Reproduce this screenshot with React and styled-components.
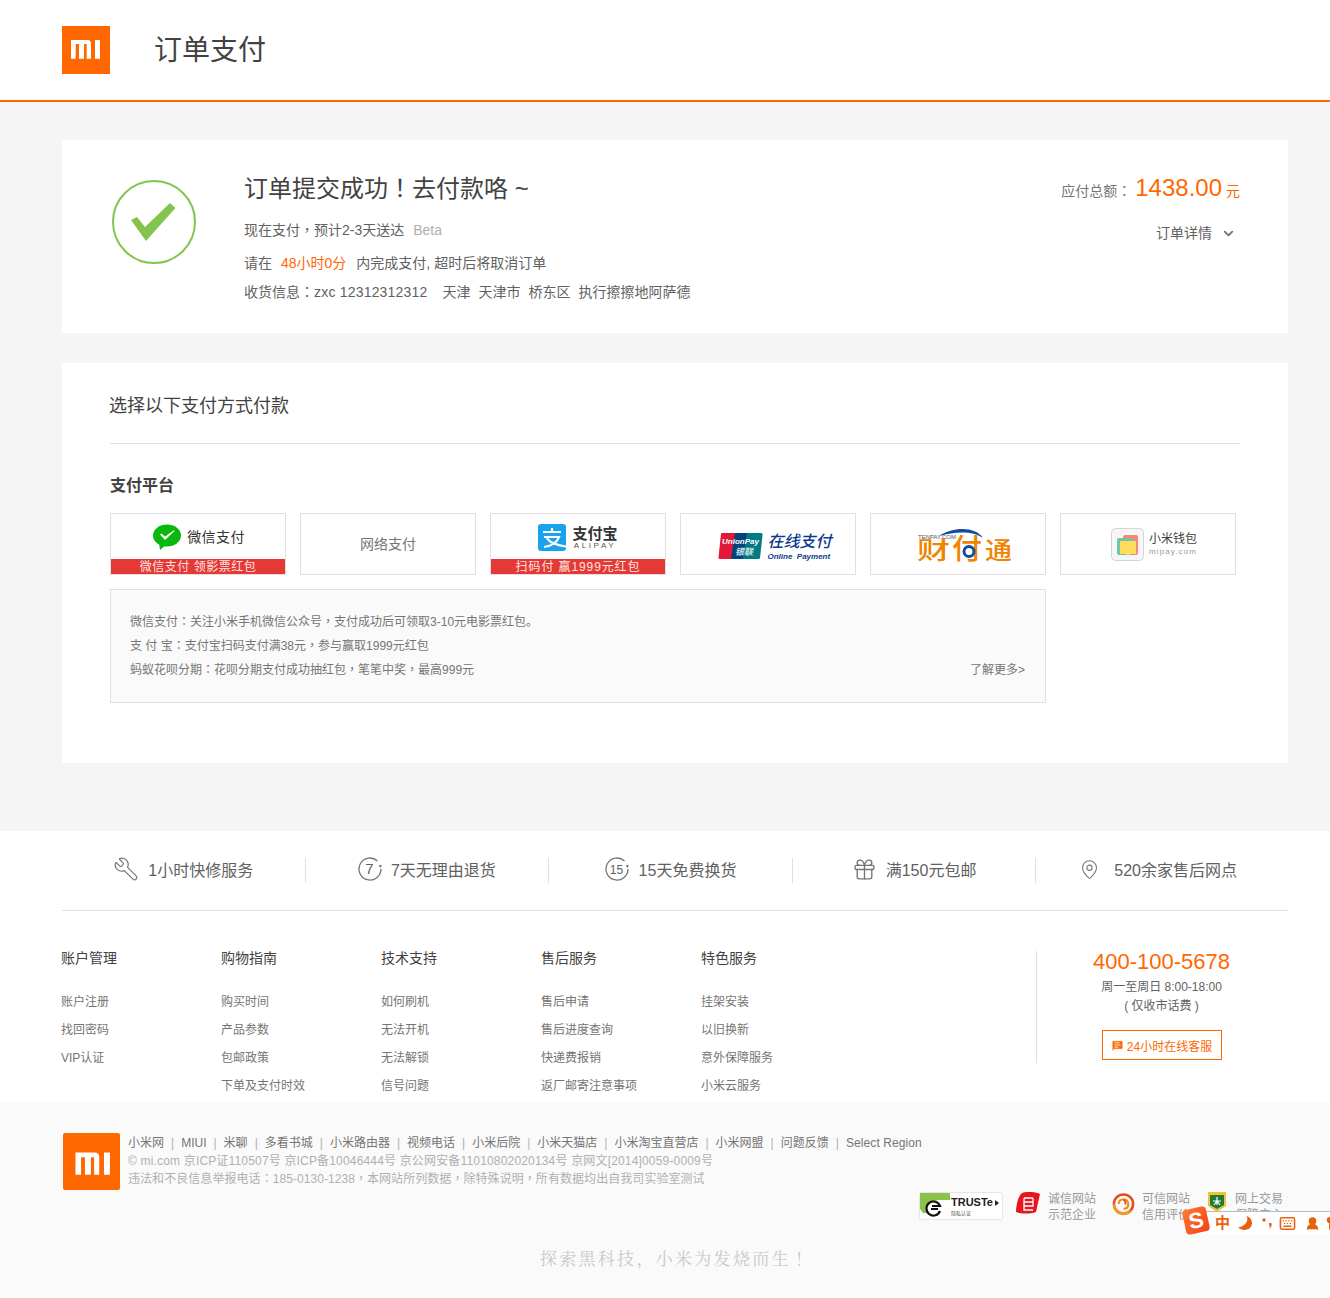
import React from "react";
import styled, { createGlobalStyle } from "styled-components";
import { Wrench, Gift, MapPin, ChevronDown, MessageSquareText, Keyboard, UserRound, Shirt } from "lucide-react";

const FONT = '"Liberation Sans", "Noto Sans CJK SC", sans-serif';
const ORANGE = "#ff6700";

const Global = createGlobalStyle`
  html, body { margin: 0; padding: 0; background: #fff; }
  #root { width: 1330px; height: 1298px; overflow: hidden; position: relative; }
  * { box-sizing: border-box; }
  body { font-family: ${FONT}; color: #616161; }
`;

const P = styled.span`
  font-family: "Noto Sans CJK TC", sans-serif;
  line-height: 0;
`;
const Header = styled.header`
  height: 102px;
  background: #fff;
  border-bottom: 2px solid ${ORANGE};
  padding: 26px 62px 0;
  display: flex;
  align-items: flex-start;
`;
const LogoBox = styled.div`
  width: ${(p) => p.$size}px;
  height: ${(p) => p.$size}px;
  background: ${ORANGE};
  flex: none;
  border-radius: ${(p) => p.$radius || 0}px;
  & > svg { display: block; width: 100%; height: 100%; }
`;
const PageTitle = styled.h1`
  margin: 5px 0 0 44px;
  font-size: 28px;
  line-height: 40px;
  font-weight: 400;
  color: #424242;
`;
const Main = styled.main`
  background: #f5f5f5;
  height: 729px;
  padding: 38px 42px 0 62px;
`;
const OrderCard = styled.section`
  height: 193px;
  background: #fff;
  padding: 35px 48px 0 50px;
  display: flex;
  align-items: flex-start;
`;
const CheckBadge = styled.svg`
  width: 84px;
  height: 84px;
  margin-top: 5px;
  flex: none;
`;
const OrderInfo = styled.div`
  margin-left: 48px;
`;
const OrderTitle = styled.h2`
  margin: 0 0 13px;
  font-size: 24px;
  line-height: 28px;
  font-weight: 400;
  color: #424242;
  white-space: pre;
`;
const OrderLine = styled.p`
  margin: 0 0 ${(p) => p.$after}px;
  font-size: 14px;
  line-height: 28px;
  color: #616161;
  white-space: pre;
`;
const Beta = styled.span`
  color: #b0b0b0;
  margin-left: 9px;
`;
const Hot = styled.span`
  color: ${ORANGE};
  margin: 0 10px 0 9px;
`;
const Digits = styled.span`
  letter-spacing: 0.2px;
`;
const Addr = styled.span`
  margin-left: ${(p) => p.$left}px;
`;
const OrderTotal = styled.div`
  margin-left: auto;
  margin-top: -1px;
  text-align: right;
`;
const TotalLine = styled.div`
  font-size: 14px;
  line-height: 28px;
  color: #757575;
  white-space: nowrap;
`;
const TotalAmount = styled.span`
  font-size: 24px;
  color: ${ORANGE};
  margin: 0 4px;
`;
const TotalUnit = styled.span`
  color: ${ORANGE};
`;
const DetailToggle = styled.div`
  margin-top: 14px;
  font-size: 14px;
  line-height: 28px;
  color: #616161;
  display: flex;
  justify-content: flex-end;
  align-items: center;
  gap: 9px;
  padding-right: 4px;
`;
const PayCard = styled.section`
  height: 400px;
  margin-top: 30px;
  background: #fff;
  padding: 29px 48px 0;
`;
const PayHeading = styled.h3`
  margin: 0;
  padding-bottom: 23px;
  border-bottom: 1px solid #e0e0e0;
  font-size: 18px;
  line-height: 28px;
  font-weight: 400;
  text-indent: -1px;
  color: #424242;
`;
const PlatformTitle = styled.h4`
  margin: 29px 0 14px;
  font-size: 16px;
  line-height: 26px;
  font-weight: 700;
  color: #424242;
`;
const Tiles = styled.div`
  display: flex;
  gap: 14px;
`;
const Tile = styled.div`
  position: relative;
  width: 176px;
  height: 62px;
  border: 1px solid #e0e0e0;
  background: #fff;
  flex: none;
  display: flex;
  justify-content: center;
  padding-top: ${(p) => p.$top || 0}px;
`;
const PromoStrip = styled.div`
  position: absolute;
  left: 0;
  right: 0;
  bottom: 0;
  height: 15px;
  background: #e53935;
  color: #ffe4e0;
  text-align: center;
  font-size: 12px;
  line-height: 16px;
  letter-spacing: ${(p) => p.$spacing}px;
  overflow: hidden;
`;
const BrandRow = styled.div`
  display: flex;
  align-items: ${(p) => p.$align || "center"};
  height: max-content;
  gap: ${(p) => p.$gap}px;
  margin-left: ${(p) => p.$left || 0}px;
`;
const WeChatLabel = styled.span`
  font-size: 14px;
  line-height: 26px;
  letter-spacing: 0.4px;
  color: #333;
`;
const NetLabel = styled.span`
  font-size: 14px;
  line-height: 60px;
  color: #757575;
`;
const AlipayBlock = styled.div`
  display: flex;
  flex-direction: column;
  align-items: center;
  padding-top: 2px;
`;
const AlipayName = styled.span`
  font-size: 15px;
  line-height: 15px;
  font-weight: 700;
  color: #333;
`;
const AlipayLatin = styled.span`
  font-size: 8px;
  line-height: 10px;
  letter-spacing: 2.6px;
  color: #555;
`;
const UnionBlock = styled.div`
  display: flex;
  flex-direction: column;
  color: #0b3b8c;
  padding-top: 1px;
`;
const UnionName = styled.span`
  font-size: 16px;
  line-height: 18px;
  font-weight: 500;
  font-style: italic;
`;
const UnionLatin = styled.span`
  font-size: 8px;
  line-height: 11px;
  font-weight: 700;
  font-style: italic;
  white-space: pre;
`;
const MiPayBlock = styled.div`
  display: flex;
  flex-direction: column;
`;
const MiPayName = styled.span`
  font-size: 12px;
  line-height: 14px;
  color: #424242;
`;
const MiPayLatin = styled.span`
  font-size: 8px;
  line-height: 12px;
  letter-spacing: 1.1px;
  color: #999;
`;
const Notice = styled.div`
  margin-top: 14px;
  width: 936px;
  height: 114px;
  background: #fafafa;
  border: 1px solid #e0e0e0;
  padding: 20px 20px 0 19px;
  font-size: 12px;
  line-height: 24px;
  color: #757575;
`;
const NoticeRow = styled.div`
  display: flex;
  justify-content: space-between;
`;
const FooterTop = styled.footer`
  background: #fff;
  height: 272px;
  padding: 0 42px 0 62px;
`;
const Services = styled.ul`
  list-style: none;
  margin: 0;
  padding: 27px 0 0;
  height: 80px;
  border-bottom: 1px solid #e0e0e0;
  display: flex;
`;
const Service = styled.li`
  width: 243.6px;
  height: 25px;
  padding-bottom: 3px;
  display: flex;
  align-items: center;
  justify-content: center;
  gap: ${(p) => p.$gap}px;
  font-size: 16px;
  color: #616161;
  border-right: ${(p) => (p.$last ? "none" : "1px solid #e0e0e0")};
  & > svg { flex: none; color: #757575; }
`;
const FlipWrench = styled(Wrench)`
  transform: scaleX(-1);
`;
const FooterBody = styled.div`
  display: flex;
  padding-top: 40px;
  margin-left: -1px;
`;
const NavCol = styled.div`
  width: 160px;
  flex: none;
`;
const NavHead = styled.div`
  font-size: 14px;
  line-height: 14px;
  color: #424242;
  margin-bottom: 23px;
`;
const NavLink = styled.div`
  font-size: 12px;
  line-height: 28px;
  color: #757575;
`;
const Contact = styled.div`
  margin-left: auto;
  width: 252px;
  height: 112px;
  padding-right: 2px;
  border-left: 1px solid #e0e0e0;
  display: flex;
  flex-direction: column;
  align-items: center;
`;
const Phone = styled.div`
  font-size: 22px;
  line-height: 22px;
  color: ${ORANGE};
`;
const ContactText = styled.div`
  margin-top: 5px;
  font-size: 12px;
  line-height: 19px;
  color: #616161;
  text-align: center;
  white-space: pre;
`;
const ChatButton = styled.div`
  margin-top: 14px;
  width: 120px;
  height: 30px;
  border: 1px solid ${ORANGE};
  color: ${ORANGE};
  font-size: 12px;
  display: flex;
  align-items: center;
  justify-content: center;
  gap: 3px;
`;
const FooterInfo = styled.div`
  height: 195px;
  background: #fafafa;
  padding: 30px 47px 0 63px;
`;
const InfoRow = styled.div`
  display: flex;
  align-items: flex-start;
`;
const InfoText = styled.div`
  margin-left: 8px;
  padding-top: 1px;
  width: 785px;
  flex: none;
  font-size: 12px;
  line-height: 18px;
  color: #b0b0b0;
  white-space: nowrap;
`;
const InfoLine = styled.div`
  letter-spacing: ${(p) => p.$spacing || 0}px;
`;
const InfoLink = styled.span`
  color: #757575;
  letter-spacing: ${(p) => (p.$latin ? 0.1 : 0)}px;
`;
const InfoSep = styled.span`
  color: #b0b0b0;
  margin: 0 7px;
`;
const Badges = styled.div`
  margin-left: auto;
  margin-top: 59px;
  flex: none;
  display: flex;
  align-items: flex-start;
  white-space: nowrap;
`;
const Badge = styled.div`
  display: flex;
  align-items: flex-start;
  margin-left: ${(p) => p.$left}px;
  & > svg { flex: none; display: block; }
`;
const BadgeText = styled.div`
  margin-left: ${(p) => p.$left}px;
  margin-top: -1px;
  font-size: 12px;
  line-height: 16px;
  color: #999;
`;
const Slogan = styled.div`
  margin-top: 24px;
  padding-left: 4px;
  text-align: center;
  font-family: "Noto Serif CJK SC", "Liberation Serif", serif;
  font-size: 17px;
  line-height: 22px;
  letter-spacing: 2.3px;
  color: #c8c8c8;
`;
const SloganMark = styled.span`
  font-family: "Noto Serif CJK TC", "Liberation Serif", serif;
  line-height: 0;
`;
const Ime = styled.div`
  position: absolute;
  left: 1195px;
  top: 1211px;
  width: 140px;
  height: 23px;
  background: #fff;
  border-top: 1px solid #a9bfd2;
  border-left: 1px solid #a9bfd2;
  display: flex;
  align-items: center;
  padding-left: 19px;
  color: #e8610c;
`;
const ImeLogo = styled.div`
  position: absolute;
  left: -12px;
  top: -4px;
  width: 24px;
  height: 25px;
  border-radius: 4px;
  transform: rotate(-12deg);
  background: linear-gradient(135deg, #ff7a2f, #f1431a);
  color: #fff;
  font-size: 22px;
  font-weight: 700;
  line-height: 25px;
  text-align: center;
`;
const ImeChar = styled.span`
  font-size: 15px;
  font-weight: 700;
  line-height: 20px;
  margin-right: 8px;
`;
const ImeIcon = styled.span`
  display: flex;
  flex: none;
  margin-right: ${(p) => p.$right}px;
`;

function MiMark({ footer }) {
  return (
    <svg viewBox={footer ? "-1.5 -2.5 48 48" : "0 0 48 48"}>
      <path
        fill="#fff"
        d="M9 14H25.500a3.500 3.500 0 0 1 3.500 3.500V32.700H24.700V18H22V32.700H17V18H13.700V32.700H9ZM33 14h5V32.700h-5Z"
      />
    </svg>
  );
}

function WeChatIcon() {
  return (
    <svg width="28" height="26" viewBox="0 0 28 26">
      <ellipse cx="14" cy="11.5" rx="14" ry="11" fill="#09b80d" />
      <path d="M6 19l1 7 6-5z" fill="#09b80d" />
      <path d="M7 10.500l1.500-1 3.500 3 9-6.200.6.6L12 16z" fill="#fff" />
    </svg>
  );
}

function AlipayIcon() {
  return (
    <svg width="28" height="27" viewBox="0 0 28 27">
      <rect width="28" height="27" rx="3" fill="#1aa3ed" />
      <path
        d="M5 8h18M14 4v4M6 13h15c-2 6-8 9-15 10M9 14c2 4 8 7 19 8.500"
        stroke="#fff"
        strokeWidth="2.200"
        fill="none"
      />
    </svg>
  );
}

function UnionIcon() {
  return (
    <svg width="45" height="28" viewBox="0 0 45 28">
      <path d="M4 1h14L14 27H2q-2 0-1.500-2L3 2q.3-1 1-1z" fill="#e21836" />
      <path d="M17 1h13L26 27H13z" fill="#00447c" />
      <path d="M29 1h14q2 0 1.500 2L42 26q-.2 1-1.500 1H25z" fill="#007b84" />
      <text x="4" y="12" fontFamily="Liberation Sans" fontSize="8" fontWeight="700" fontStyle="italic" fill="#fff">UnionPay</text>
      <text x="17" y="23" fontFamily="Noto Sans CJK SC" fontSize="9" fontWeight="700" fontStyle="italic" fill="#cfe6ea">银联</text>
    </svg>
  );
}

function TenpayLogo() {
  return (
    <svg width="96" height="47" viewBox="0 0 96 47">
      <path d="M22 15C36 6 58 5 66 17C56 10 40 10 22 15Z" fill="#124c9c" />
      <text x="1" y="18" fontFamily="Liberation Sans" fontSize="6" fill="#555">TENPAY.COM</text>
      <text x="0" y="38" fontFamily="Noto Sans CJK SC" fontSize="24" fontWeight="500" fill="#f08300" textLength="33" lengthAdjust="spacingAndGlyphs">财</text>
      <text x="35" y="38" fontFamily="Noto Sans CJK SC" fontSize="28" fontWeight="500" fill="#f08300" textLength="30" lengthAdjust="spacingAndGlyphs">付</text>
      <text x="68" y="38" fontFamily="Noto Sans CJK SC" fontSize="24" fontWeight="500" fill="#f08300" textLength="27" lengthAdjust="spacingAndGlyphs">通</text>
      <circle cx="52" cy="30.500" r="5" fill="#fff" stroke="#124c9c" strokeWidth="3" />
    </svg>
  );
}

function MiPayIcon() {
  return (
    <svg width="33" height="33" viewBox="0 0 33 33">
      <rect x=".5" y=".5" width="32" height="32" rx="4" fill="#f6f6f6" stroke="#d5d5d5" />
      <rect x="12" y="7" width="15" height="20" rx="2" fill="#fb8678" />
      <rect x="6" y="10" width="17" height="17" rx="2" fill="#6ec6a2" />
      <path d="M9 13h16v13h-6l-2 2-2-2H9z" fill="#ffdb5c" />
    </svg>
  );
}

function DayCircle({ label, size }) {
  return (
    <svg width="24" height="24" viewBox="0 0 24 24" fill="none">
      <path d="M19.500 4A11 11 0 1 0 23 12" stroke="#757575" strokeWidth="1.300" />
      <path d="M20.500 8.500l2.300 2.500 1-3.300z" fill="#757575" />
      <text x="11.500" y="17" textAnchor="middle" fontFamily="Liberation Sans" fontSize={size} fill="#616161">{label}</text>
    </svg>
  );
}

function Truste() {
  return (
    <svg width="84" height="28" viewBox="0 0 84 28">
      <rect x=".5" y=".5" width="83" height="27" rx="2" fill="#fff" stroke="#e6e6e6" />
      <path d="M1 1h30v7H18l-9 13H4l-3-4z" fill="#8bc34a" />
      <circle cx="15" cy="17" r="8.500" fill="#fff" />
      <path d="M21 19a7 7 0 1 1 0-5H13M12 17h7" stroke="#111" strokeWidth="2.200" fill="none" />
      <text x="32" y="14" fontFamily="Liberation Sans" fontSize="11" fontWeight="700" fill="#222">TRUSTe</text>
      <path d="M76 8l4 3-4 3z" fill="#222" />
      <text x="32" y="23" fontFamily="Noto Sans CJK SC" fontSize="5" fill="#555">隐私认证</text>
    </svg>
  );
}

function CreditRed() {
  return (
    <svg width="24" height="22" viewBox="0 0 24 22">
      <path d="M6 1C12-1 20 0 24 2L20 20C14 22 6 22 0 20 0 14 2 4 6 1Z" fill="#e8141e" />
      <path d="M8 6h9M8 10h9M8 14h9v-8M8 6v12h9" stroke="#fff" strokeWidth="1.300" fill="none" />
    </svg>
  );
}

function CreditSwirl() {
  return (
    <svg width="23" height="24" viewBox="0 0 24 24" fill="none">
      <circle cx="12" cy="12" r="10" stroke="#e84a1a" strokeWidth="2.600" />
      <path d="M19 19a10 10 0 0 1-17-7" stroke="#f59a1a" strokeWidth="2.600" />
      <path d="M7 12a5 5 0 0 1 10 0c0 3-2 5-5 5" stroke="#f08a1a" strokeWidth="2.200" />
      <path d="M12 7.500c2 1 2.500 3 2 5" stroke="#e84a1a" strokeWidth="1.800" />
    </svg>
  );
}

function TradeShield() {
  return (
    <svg width="18" height="20" viewBox="0 0 18 20">
      <path d="M0 0h18v14l-9 6-9-6z" fill="#f1c232" />
      <path d="M2 3h14v10l-7 4-7-4z" fill="#1f7a3d" />
      <path d="M9 5v8M5 9h8M6 13l3-4 3 4" stroke="#fff" strokeWidth="1.200" fill="none" />
    </svg>
  );
}

function ImeMoon() {
  return (
    <svg width="14" height="15" viewBox="0 0 14 15">
      <path d="M8.500 0C11 4 8 10 0 11.500 5 16 14 14 14 7 14 4 12 1 8.500 0Z" fill="currentColor" />
    </svg>
  );
}

function ImePunct() {
  return (
    <svg width="10" height="12" viewBox="0 0 10 12">
      <circle cx="2" cy="3" r="1.700" fill="currentColor" />
      <path d="M7 6h2.500c.5 3-.5 5-2.500 6 1-1.500 1-3 0-4z" fill="currentColor" />
    </svg>
  );
}

const NAV = [
  ["账户管理", ["账户注册", "找回密码", "VIP认证"]],
  ["购物指南", ["购买时间", "产品参数", "包邮政策", "下单及支付时效"]],
  ["技术支持", ["如何刷机", "无法开机", "无法解锁", "信号问题"]],
  ["售后服务", ["售后申请", "售后进度查询", "快递费报销", "返厂邮寄注意事项"]],
  ["特色服务", ["挂架安装", "以旧换新", "意外保障服务", "小米云服务"]],
];
const LINKS = ["小米网", "MIUI", "米聊", "多看书城", "小米路由器", "视频电话", "小米后院", "小米天猫店", "小米淘宝直营店", "小米网盟", "问题反馈", "Select Region"];

export default function App() {
  return (
    <>
      <Global />
      <Header>
        <LogoBox $size={48}><MiMark /></LogoBox>
        <PageTitle>订单支付</PageTitle>
      </Header>
      <Main>
        <OrderCard>
          <CheckBadge viewBox="0 0 84 84">
            <circle cx="42" cy="42" r="41" fill="none" stroke="#83c44e" strokeWidth="2" />
            <path d="M19 40l15 21L63.400 28 58 23 33 47 25 37z" fill="#83c44e" />
          </CheckBadge>
          <OrderInfo>
            <OrderTitle>订单提交成功<P>！</P>去付款咯 ~</OrderTitle>
            <OrderLine $after={5}>现在支付<P>，</P>预计2-3天送达<Beta>Beta</Beta></OrderLine>
            <OrderLine $after={1}>请在<Hot>48小时0分</Hot>内完成支付, 超时后将取消订单</OrderLine>
            <OrderLine $after={0}>
              收货信息<P>：</P><Digits>zxc 12312312312</Digits><Addr $left={15}>天津</Addr><Addr $left={8}>天津市</Addr><Addr $left={8}>桥东区</Addr><Addr $left={8}>执行擦擦地阿萨德</Addr>
            </OrderLine>
          </OrderInfo>
          <OrderTotal>
            <TotalLine>应付总额<P>：</P><TotalAmount>1438.00</TotalAmount><TotalUnit>元</TotalUnit></TotalLine>
            <DetailToggle>订单详情<ChevronDown size={15} strokeWidth={3} color="#757575" /></DetailToggle>
          </OrderTotal>
        </OrderCard>
        <PayCard>
          <PayHeading>选择以下支付方式付款</PayHeading>
          <PlatformTitle>支付平台</PlatformTitle>
          <Tiles>
            <Tile $top={10}>
              <BrandRow $gap={6} $left={2}><WeChatIcon /><WeChatLabel>微信支付</WeChatLabel></BrandRow>
              <PromoStrip $spacing={0.5}>微信支付 领影票红包</PromoStrip>
            </Tile>
            <Tile><NetLabel>网络支付</NetLabel></Tile>
            <Tile $top={10}>
              <BrandRow $gap={6} $align="flex-start">
                <AlipayIcon />
                <AlipayBlock><AlipayName>支付宝</AlipayName><AlipayLatin>ALIPAY</AlipayLatin></AlipayBlock>
              </BrandRow>
              <PromoStrip $spacing={0.9}>扫码付 赢1999元红包</PromoStrip>
            </Tile>
            <Tile $top={18}>
              <BrandRow $gap={4} $left={14} $align="flex-start">
                <UnionIcon />
                <UnionBlock><UnionName>在线支付</UnionName><UnionLatin>Online  Payment</UnionLatin></UnionBlock>
              </BrandRow>
            </Tile>
            <Tile $top={7}><BrandRow $gap={0} $left={14}><TenpayLogo /></BrandRow></Tile>
            <Tile $top={14}>
              <BrandRow $gap={5} $left={12}>
                <MiPayIcon />
                <MiPayBlock><MiPayName>小米钱包</MiPayName><MiPayLatin>mipay.com</MiPayLatin></MiPayBlock>
              </BrandRow>
            </Tile>
          </Tiles>
          <Notice>
            <NoticeRow><span>微信支付<P>：</P>关注小米手机微信公众号<P>，</P>支付成功后可领取3-10元电影票红包。</span></NoticeRow>
            <NoticeRow><span>支 付 宝<P>：</P>支付宝扫码支付满38元<P>，</P>参与赢取1999元红包</span></NoticeRow>
            <NoticeRow><span>蚂蚁花呗分期<P>：</P>花呗分期支付成功抽红包<P>，</P>笔笔中奖<P>，</P>最高999元</span><span>了解更多&gt;</span></NoticeRow>
          </Notice>
        </PayCard>
      </Main>
      <FooterTop>
        <Services>
          <Service $gap={9}><FlipWrench size={26} strokeWidth={1.1} />1小时快修服务</Service>
          <Service $gap={9}><DayCircle label="7" size={15} />7天无理由退货</Service>
          <Service $gap={10}><DayCircle label="15" size={12} />15天免费换货</Service>
          <Service $gap={9}><Gift size={25} strokeWidth={1.3} />满150元包邮</Service>
          <Service $gap={14} $last><MapPin size={21} strokeWidth={1.2} />520余家售后网点</Service>
        </Services>
        <FooterBody>
          {NAV.map(([head, items]) => (
            <NavCol key={head}>
              <NavHead>{head}</NavHead>
              {items.map((item) => <NavLink key={item}>{item}</NavLink>)}
            </NavCol>
          ))}
          <Contact>
            <Phone>400-100-5678</Phone>
            <ContactText>周一至周日 8:00-18:00{"\n"}( 仅收市话费 )</ContactText>
            <ChatButton><MessageSquareText size={13} fill={ORANGE} color="#fff" strokeWidth={1.5} />24小时在线客服</ChatButton>
          </Contact>
        </FooterBody>
      </FooterTop>
      <FooterInfo>
        <InfoRow>
          <LogoBox $size={57} $radius={2}><MiMark footer /></LogoBox>
          <InfoText>
            <InfoLine>
              {LINKS.map((l, i) => (
                <React.Fragment key={l}>
                  {i > 0 && <InfoSep>|</InfoSep>}
                  <InfoLink $latin={l === "Select Region"}>{l}</InfoLink>
                </React.Fragment>
              ))}
            </InfoLine>
            <InfoLine $spacing={0.17}>© mi.com 京ICP证110507号 京ICP备10046444号 京公网安备11010802020134号 京网文[2014]0059-0009号</InfoLine>
            <InfoLine $spacing={0.06}>违法和不良信息举报电话<P>：</P>185-0130-1238<P>，</P>本网站所列数据<P>，</P>除特殊说明<P>，</P>所有数据均出自我司实验室测试</InfoLine>
          </InfoText>
          <Badges>
            <Badge $left={0}><Truste /></Badge>
            <Badge $left={13}>
              <CreditRed />
              <BadgeText $left={8}>诚信网站<br />示范企业</BadgeText>
            </Badge>
            <Badge $left={16}>
              <CreditSwirl />
              <BadgeText $left={7}>可信网站<br />信用评价</BadgeText>
            </Badge>
            <Badge $left={18}>
              <TradeShield />
              <BadgeText $left={9}>网上交易<br />保障中心</BadgeText>
            </Badge>
          </Badges>
        </InfoRow>
        <Slogan>探索黑科技，小米为发烧而生<SloganMark>！</SloganMark></Slogan>
      </FooterInfo>
      <Ime>
        <ImeLogo>S</ImeLogo>
        <ImeChar>中</ImeChar>
        <ImeIcon $right={10}><ImeMoon /></ImeIcon>
        <ImeIcon $right={7}><ImePunct /></ImeIcon>
        <ImeIcon $right={9}><Keyboard size={17} strokeWidth={2.2} /></ImeIcon>
        <ImeIcon $right={6}><UserRound size={15} fill="currentColor" /></ImeIcon>
        <ImeIcon $right={0}><Shirt size={15} fill="currentColor" /></ImeIcon>
      </Ime>
    </>
  );
}
